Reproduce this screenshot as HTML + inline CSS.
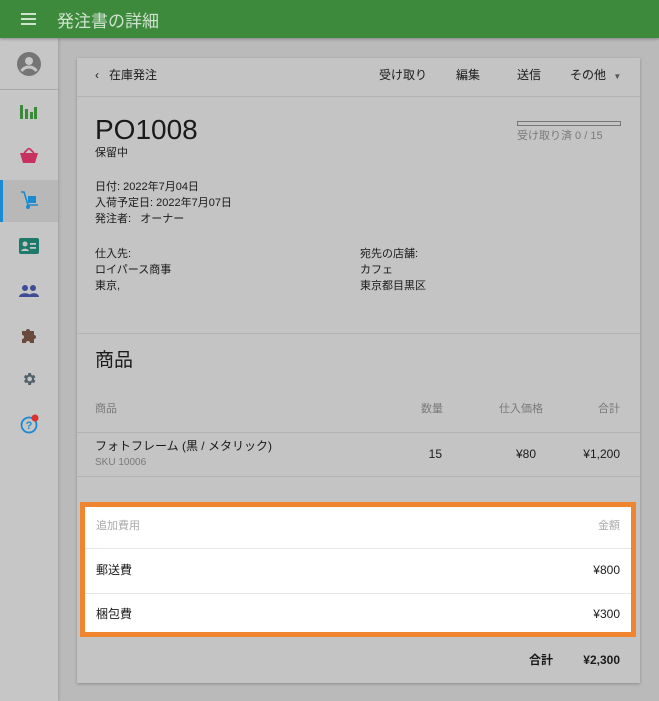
<!DOCTYPE html>
<html><head><meta charset="utf-8"><style>
*{margin:0;padding:0;box-sizing:border-box}
body{width:659px;height:701px;overflow:hidden;background:#bababa;font-family:"Liberation Sans","Noto Sans CJK JP",sans-serif;color:#1a1a1a;position:relative;font-size:12px}
.hdr{position:absolute;left:0;top:0;width:659px;height:38px;background:#3d8a3d;color:#cfe3cf;box-shadow:0 1px 3px rgba(0,0,0,.3);z-index:2}
.hdr .t{position:absolute;left:57px;top:7px;font-size:17px}
.side{position:absolute;left:0;top:38px;width:58px;height:663px;background:#c6c6c6;box-shadow:1px 0 3px rgba(0,0,0,.15)}
.ic{position:absolute;left:17px}
.card{position:absolute;left:77px;top:58px;width:563px;height:625px;background:#c4c4c4;box-shadow:0 1px 3px rgba(0,0,0,.25)}
.a{position:absolute;white-space:nowrap;line-height:16px}
.ln{position:absolute;left:0;width:563px;height:1px;background:#b3b3b3}
.g{color:#7a7a7a;font-size:11px}
.box{position:absolute;left:80px;top:502px;width:556px;height:135px;border:5px solid #f08530;background:#fff}
</style></head><body>
<div class="hdr"><svg style="position:absolute;left:21px;top:13px" width="15" height="12"><rect y="0" width="15" height="2" fill="#cfe3cf"/><rect y="5" width="15" height="2" fill="#cfe3cf"/><rect y="10" width="15" height="2" fill="#cfe3cf"/></svg><span class="t">発注書の詳細</span></div>
<div class="side">
<svg class="ic" style="top:14px" width="24" height="24" viewBox="0 0 24 24"><circle cx="12" cy="12" r="12" fill="#757575"/><circle cx="12" cy="9" r="4" fill="#c6c6c6"/><path d="M4.5 19c2-3 4.5-4 7.5-4s5.5 1 7.5 4" stroke="#c6c6c6" stroke-width="3" fill="none"/></svg>
<div style="position:absolute;left:0;top:51px;width:58px;height:1px;background:#aaa"></div>
<svg class="ic" style="top:65px;left:20px" width="18" height="16"><rect x="0" y="2" width="3" height="14" fill="#3a8a3a"/><rect x="5" y="6" width="3" height="10" fill="#3a8a3a"/><rect x="10" y="9" width="3" height="7" fill="#3a8a3a"/><rect x="14" y="4" width="3" height="12" fill="#3a8a3a"/></svg>
<svg class="ic" style="top:110px;left:20px" width="18" height="15"><path d="M0 5h18l-3 10H3z" fill="#c8305f"/><path d="M4 5l5-5 5 5" stroke="#c8305f" stroke-width="1.6" fill="none"/></svg>
<div style="position:absolute;left:0;top:142px;width:58px;height:42px;background:#b8b8b8"></div>
<div style="position:absolute;left:0;top:142px;width:3px;height:42px;background:#1a8bd0"></div>
<svg class="ic" style="top:152px;left:20px" width="20" height="20"><path d="M1 2h3l4 13h10" stroke="#1a8bd0" stroke-width="1.6" fill="none"/><rect x="8" y="6" width="8" height="7" fill="#1a8bd0"/><circle cx="8" cy="17" r="2" fill="#1a8bd0"/></svg>
<svg class="ic" style="top:200px;left:19px" width="20" height="16"><rect width="20" height="16" rx="2" fill="#1d7a6a"/><circle cx="6" cy="6" r="2.5" fill="#c6c6c6"/><path d="M2 13c1-3 7-3 8 0z" fill="#c6c6c6"/><rect x="11" y="5" width="6" height="1.8" fill="#c6c6c6"/><rect x="11" y="9" width="6" height="1.8" fill="#c6c6c6"/></svg>
<svg class="ic" style="top:247px;left:19px" width="20" height="12"><circle cx="6" cy="3" r="3" fill="#3d4c95"/><circle cx="14" cy="3" r="3" fill="#3d4c95"/><path d="M0 12c0-5 12-5 12 0zM9 12c1-5 11-5 11 0z" fill="#3d4c95"/></svg>
<svg class="ic" style="top:289px;left:20px" width="18" height="18"><path d="M2 4h4a2 2 0 014 0h4v4a2 2 0 010 4v4h-4a2 2 0 00-4 0H2v-4a2 2 0 000-4z" fill="#6b4a3e"/></svg>
<svg class="ic" style="top:333px;left:21px" width="16" height="16" viewBox="0 0 24 24"><path fill="#50616b" d="M19.4 13a7.5 7.5 0 000-2l2.1-1.6-2-3.5-2.5 1a7 7 0 00-1.7-1L15 3h-4l-.4 2.9a7 7 0 00-1.7 1l-2.5-1-2 3.5L6.6 11a7.5 7.5 0 000 2l-2.1 1.6 2 3.5 2.5-1a7 7 0 001.7 1L11 21h4l.4-2.9a7 7 0 001.7-1l2.5 1 2-3.5zM13 15.5a3.5 3.5 0 110-7 3.5 3.5 0 010 7z"/></svg>
<svg class="ic" style="top:376px;left:20px" width="20" height="20"><circle cx="9" cy="11" r="7.5" stroke="#1a8bd0" stroke-width="1.8" fill="none"/><text x="9" y="15" font-size="11" font-weight="bold" fill="#1a8bd0" text-anchor="middle" font-family="Liberation Sans">?</text><circle cx="15" cy="4" r="3.5" fill="#d8322a"/></svg>
</div>
<div class="card">
<div class="a" style="left:18px;top:9px;font-size:12px">‹&nbsp;&nbsp; 在庫発注</div>
<div class="a" style="left:302px;top:9px">受け取り</div>
<div class="a" style="left:379px;top:9px">編集</div>
<div class="a" style="left:440px;top:9px">送信</div>
<div class="a" style="left:493px;top:9px">その他 <span style="font-size:8px;color:#555;margin-left:4px">▼</span></div>
<div class="ln" style="top:38px"></div>
<div class="a" style="left:18px;top:56px;font-size:28px;line-height:32px">PO1008</div>
<div class="a" style="left:18px;top:87px;font-size:11px">保留中</div>
<div class="a" style="left:440px;top:63px;width:104px;height:5px;border:1px solid #777"></div>
<div class="a g" style="left:440px;top:70px">受け取り済 0 / 15</div>
<div class="a" style="left:18px;top:121px;font-size:11px;line-height:16px">日付: 2022年7月04日<br>入荷予定日: 2022年7月07日<br>発注者:&nbsp;&nbsp; オーナー</div>
<div class="a" style="left:18px;top:188px;font-size:11px;line-height:16px">仕入先:<br>ロイパース商事<br>東京,</div>
<div class="a" style="left:283px;top:188px;font-size:11px;line-height:16px">宛先の店舗:<br>カフェ<br>東京都目黒区</div>
<div class="ln" style="top:275px"></div>
<div class="a" style="left:18px;top:291px;font-size:19px;line-height:24px">商品</div>
<div class="a g" style="left:18px;top:343px">商品</div>
<div class="a g" style="right:197px;top:343px">数量</div>
<div class="a g" style="right:97px;top:343px">仕入価格</div>
<div class="a g" style="right:20px;top:343px">合計</div>
<div class="ln" style="top:374px"></div>
<div class="a" style="left:18px;top:380px">フォトフレーム (黒 / メタリック)</div>
<div class="a g" style="left:18px;top:397px;font-size:10px">SKU 10006</div>
<div class="a" style="right:198px;top:388px">15</div>
<div class="a" style="right:104px;top:388px">¥80</div>
<div class="a" style="right:20px;top:388px">¥1,200</div>
<div class="ln" style="top:418px"></div>
<div class="a" style="right:87px;top:594px;font-weight:bold">合計</div>
<div class="a" style="right:20px;top:594px;font-weight:bold">¥2,300</div>
</div>
<div class="box">
<div class="a" style="left:11px;top:11px;color:#aaa;font-size:11px">追加費用</div>
<div class="a" style="right:11px;top:11px;color:#aaa;font-size:11px">金額</div>
<div class="a" style="left:0;top:41px;width:546px;height:1px;background:#e6e6e6"></div>
<div class="a" style="left:11px;top:55px">郵送費</div>
<div class="a" style="right:11px;top:55px">¥800</div>
<div class="a" style="left:0;top:86px;width:546px;height:1px;background:#e6e6e6"></div>
<div class="a" style="left:11px;top:99px">梱包費</div>
<div class="a" style="right:11px;top:99px">¥300</div>
</div>
</body></html>
